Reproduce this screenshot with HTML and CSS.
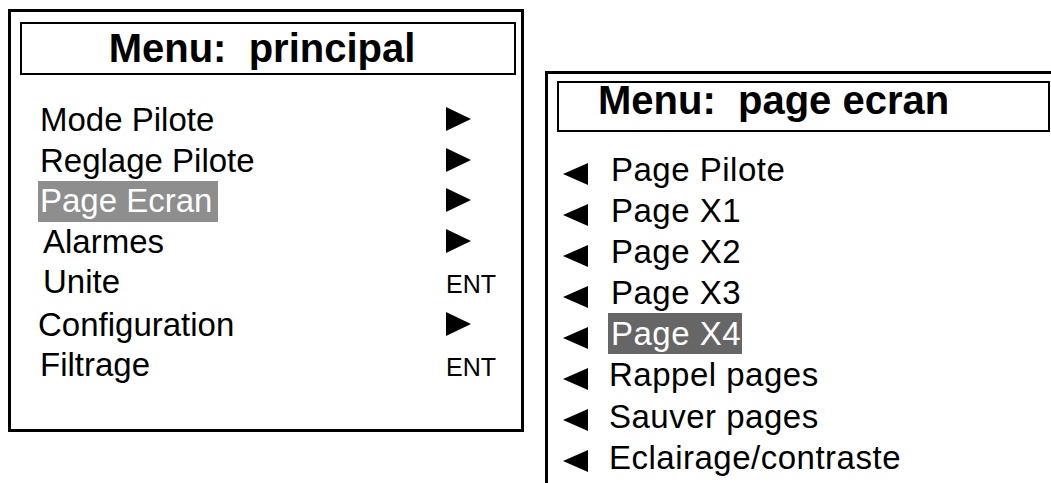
FILE: index.html
```html
<!DOCTYPE html>
<html lang="fr">
<head>
  <meta charset="UTF-8">
  <meta name="viewport" content="width=device-width, initial-scale=1.0">
  <title>Menus afficheur</title>
  <link rel="stylesheet" href="styles.css">
</head>
<body>
  <div class="screen main-menu">
    <div class="title">Menu:&nbsp; principal</div>
    <ul class="items">
      <li><span class="label">Mode Pilote</span><span class="arrow-right"></span></li>
      <li><span class="label">Reglage Pilote</span><span class="arrow-right"></span></li>
      <li><span class="label selected">Page Ecran</span><span class="arrow-right"></span></li>
      <li><span class="label shift-right">Alarmes</span><span class="arrow-right"></span></li>
      <li><span class="label shift-right">Unite</span><span class="ent">ENT</span></li>
      <li><span class="label shift-left">Configuration</span><span class="arrow-right"></span></li>
      <li><span class="label">Filtrage</span><span class="ent">ENT</span></li>
    </ul>
  </div>

  <div class="screen sub-menu">
    <div class="title">Menu:&nbsp; page ecran</div>
    <ul class="items">
      <li><span class="arrow-left"></span><span class="label">Page Pilote</span></li>
      <li><span class="arrow-left"></span><span class="label">Page X1</span></li>
      <li><span class="arrow-left"></span><span class="label">Page X2</span></li>
      <li><span class="arrow-left"></span><span class="label">Page X3</span></li>
      <li><span class="arrow-left"></span><span class="label selected">Page X4</span></li>
      <li><span class="arrow-left"></span><span class="label shift-left">Rappel pages</span></li>
      <li><span class="arrow-left"></span><span class="label shift-left">Sauver pages</span></li>
      <li><span class="arrow-left"></span><span class="label shift-left">Eclairage/contraste</span></li>
    </ul>
  </div>
</body>
</html>
```

FILE: styles.css
```css
html {
  overflow: hidden;
}
body {
  margin: 0;
  background: #fff;
  color: #000;
  font-family: "Liberation Sans", Arial, sans-serif;
  display: flex;
  align-items: flex-start;
}
.screen {
  box-sizing: border-box;
  border: 3px solid #000;
  flex: none;
}
.title {
  box-sizing: border-box;
  border: 2px solid #000;
  font-weight: bold;
  white-space: nowrap;
}
.items {
  list-style: none;
  margin: 0;
  padding: 0;
}
.label {
  white-space: nowrap;
}
.shift-right {
  margin-left: 3px;
}
.shift-left {
  margin-left: -2px;
}

/* menu principal */
.main-menu {
  width: 516px;
  height: 423px;
  margin: 9px 0 0 8px;
  padding: 10px 5px 0 9px;
}
.main-menu .title {
  height: 53px;
  line-height: 49px;
  font-size: 40px;
  text-align: center;
  padding-right: 12px;
}
.main-menu .items {
  padding: 25px 0 0 20px;
  font-size: 33px;
  line-height: 40.5px;
}
.main-menu li {
  display: grid;
  grid-template-columns: 406px auto;
  align-items: baseline;
}
.main-menu .selected {
  justify-self: start;
  margin-left: -2px;
  padding: 0 6px 0 2px;
  background: #8e8e8e;
  color: #fff;
}
.arrow-right {
  width: 0;
  height: 0;
  border-left: 25px solid #000;
  border-top: 12px solid transparent;
  border-bottom: 12px solid transparent;
}
.ent {
  font-size: 25px;
}

/* menu page ecran */
.sub-menu {
  width: 518px;
  height: 440px;
  margin: 71px 0 0 21px;
  padding: 7px 0 0 9px;
}
.sub-menu .title {
  width: 493px;
  line-height: 34px;
  padding: 0 0 13px 39px;
  font-size: 40px;
}
.sub-menu .items {
  padding-top: 17px;
  font-size: 33px;
  letter-spacing: 0.5px;
  line-height: 41.1px;
}
.sub-menu li {
  display: flex;
  align-items: center;
}
.sub-menu .selected {
  margin-left: -3px;
  padding: 0 1px 0 3px;
  background: #666;
  color: #fff;
}
.arrow-left {
  width: 0;
  height: 0;
  margin: 8px 23px 0 6px;
  border-right: 25px solid #000;
  border-top: 11px solid transparent;
  border-bottom: 11px solid transparent;
}
```
